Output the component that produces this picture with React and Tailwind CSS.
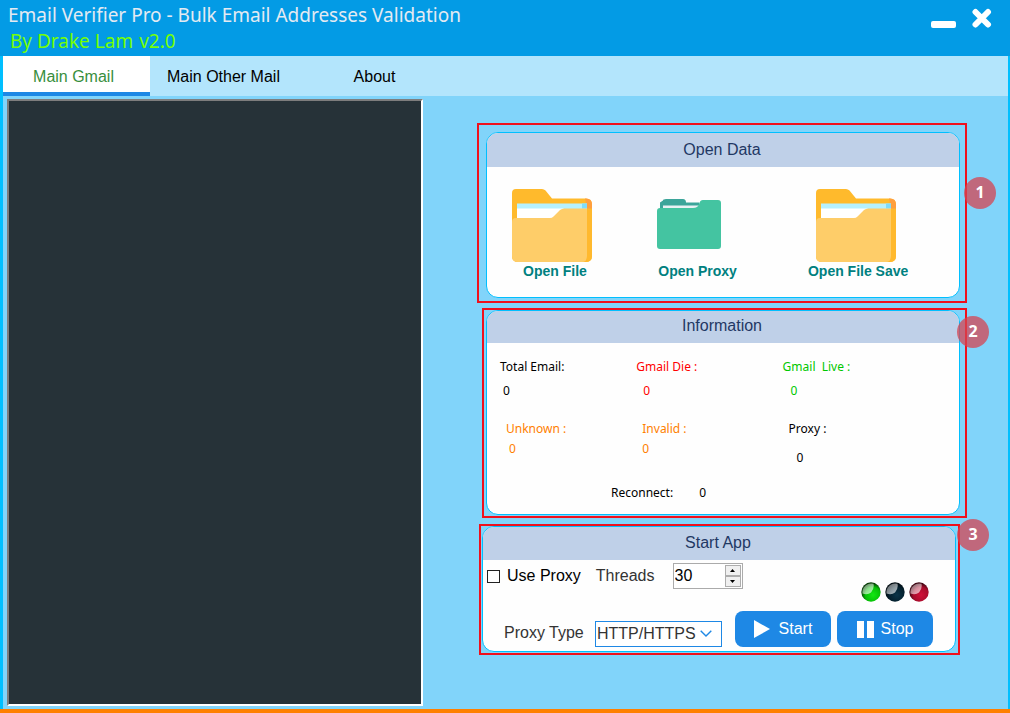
import { useState } from 'react';

function YellowFolder() {
  return (
    <svg viewBox="0 0 80 74" className="h-[74px] w-20" aria-hidden="true">
      <path d="M4 0H30q2 0 3.500 1.500L40 9.500H74q6 0 6 6V67q0 6-6 6H6q-6 0-6-6V4q0-4 4-4z" fill="#ffba2c" />
      <path d="M74 9.500q6 0 6 6V20H75l-2-10.500z" fill="#ff9f3e" />
      <path d="M5 14.500H75V32H5z" fill="#b5f1ff" />
      <path d="M70 14.500h5v5h-5z" fill="#7fdcfb" />
      <path d="M5 19.500H52L42 30H5z" fill="#fff" />
      <path d="M0 33q0-4 4-4H38q2 0 3.500-1.500L48 21Q50 19.500 52 19.500H75V68q0 5-5 5H6q-6 0-6-6z" fill="#fecd69" />
      <path d="M75 19.500H80V67q0 6-8 6 3-1 3-6z" fill="#ffb92e" />
    </svg>
  );
}

function TealFolder() {
  return (
    <svg viewBox="0 0 64 74" className="h-[74px] w-16" aria-hidden="true">
      <path d="M3 22V13.500l3-2Q6 10 9 10H26q3 0 3 3.500H42V26H3z" fill="#3ca59a" />
      <path d="M6 16.500H43V24H6z" fill="#e9f1f4" />
      <path d="M0 22Q0 19 3 19H36q5 0 6-4 1-4 4-4H61q3 0 3 3V57q0 3-3 3H3q-3 0-3-3z" fill="#44c4a1" />
    </svg>
  );
}

function Led({ id, light, mid, dark, label }) {
  return (
    <svg viewBox="0 0 20 20" className="size-5" role="img" aria-label={label}>
      <defs>
        <radialGradient id={id} cx="0.6" cy="0.65" r="0.6">
          <stop offset="0" stopColor={light} />
          <stop offset="0.65" stopColor={mid} />
          <stop offset="1" stopColor={dark} />
        </radialGradient>
        <linearGradient id={id + '-shine'} x1="0" y1="0" x2="1" y2="1">
          <stop offset="0" stopColor="#fff" stopOpacity="0.35" />
          <stop offset="1" stopColor="#fff" stopOpacity="0.7" />
        </linearGradient>
      </defs>
      <circle cx="10" cy="10" r="9.700" fill={'url(#' + id + ')'} />
      <path d="M1.500 11.500A8.800 8.800 0 0 1 12.500 1.800Q13.500 7 10 10.500 6.500 13.500 1.500 11.500z" fill={'url(#' + id + '-shine)'} />
    </svg>
  );
}

function Panel({ title, headerClass, className, badge, badgeClass, children }) {
  return (
    <section className={'relative border-2 border-[#f0101c] ' + className}>
      <div className="overflow-hidden rounded-xl border border-[#00bfff] bg-[#fefefe]">
        <h2 className={'flex items-center justify-center bg-[#bfd0e8] pr-0.5 text-[16px] leading-5 text-[#1f3864] ' + headerClass}>
          {title}
        </h2>
        {children}
      </div>
      <span
        className={
          'absolute z-10 flex size-8 items-center justify-center rounded-full bg-[#d54452]/75 pb-0.5 font-["Noto_Sans",sans-serif] text-[16px] font-bold text-white ' +
          badgeClass
        }
      >
        {badge}
      </span>
    </section>
  );
}

function Stat({ label, value, className, valueClass }) {
  return (
    <div className={'flex flex-col whitespace-pre ' + className}>
      <dt>{label}</dt>
      <dd className={valueClass}>{value}</dd>
    </div>
  );
}

const TABS = [
  { name: 'Main Gmail', width: 'w-[147px] pr-1.5' },
  { name: 'Main Other Mail', width: 'w-[147px]' },
  { name: 'About', width: 'w-[155px]' },
];

export default function App() {
  const [tab, setTab] = useState('Main Gmail');
  const [threads, setThreads] = useState(30);
  const [useProxy, setUseProxy] = useState(false);

  return (
    <div className='flex min-h-screen flex-col border-b-4 border-[#ff8000] bg-[#81d4fa] font-["Liberation_Sans",Arial,sans-serif] text-black'>
      <header className='flex h-14 justify-between bg-[#039be5] pl-2 pr-[18px] font-["Noto_Sans",sans-serif]'>
        <div className="pt-0.5">
          <h1 className="text-[19px] leading-[26px] text-[#e3eaf2]">Email Verifier Pro - Bulk Email Addresses Validation</h1>
          <p className="flex gap-1.5 pl-0.5 text-[19px] leading-[26px] text-[#76ff03]">
            <span>By Drake Lam</span>
            <span>v2.0</span>
          </p>
        </div>
        <div className="flex h-9 items-center gap-4">
          <button type="button" aria-label="Minimize" className="h-5 w-[25px]">
            <svg viewBox="0 0 25 20" className="h-5 w-[25px]">
              <rect x="0" y="13" width="25" height="7" rx="2" fill="#fff" />
            </svg>
          </button>
          <button type="button" aria-label="Close" className="size-5">
            <svg viewBox="0 0 20 20" className="size-5">
              <path d="M3.500 4L16 16.500M16 4L3.500 16.500" stroke="#fff" strokeWidth="6" strokeLinecap="round" />
            </svg>
          </button>
        </div>
      </header>

      <div className="flex flex-1 flex-col border-l-3 border-r-2 border-[#00bfff]">
        <nav role="tablist" className="flex h-10 bg-[#b3e5fc] text-[16px]">
          {TABS.map((t) => (
            <button
              key={t.name}
              type="button"
              role="tab"
              aria-selected={tab === t.name}
              onClick={() => setTab(t.name)}
              className={
                'border-b-4 pt-1.5 ' +
                t.width +
                (tab === t.name ? ' border-[#1e88e5] bg-white text-[#388e3c]' : ' border-transparent')
              }
            >
              {t.name}
            </button>
          ))}
        </nav>

        <main className="grid flex-1 grid-cols-[416fr_585fr] pb-[3px] pl-1 pt-[3px]">
          <textarea
            aria-label="Email output"
            className="h-full w-full resize-none border-2 border-b-white border-l-[#7d7d7d] border-r-white border-t-[#7d7d7d] bg-[#263238] p-1 text-sm text-white outline-none"
          />

          <div className="pt-6">
            <Panel
              title="Open Data"
              headerClass="h-[34px]"
              className="ml-[54px] mr-[41px] pb-[3px] pl-[7px] pr-[5px] pt-[7px]"
              badge="1"
              badgeClass="-right-[31px] top-[52px]"
            >
              <div className="grid grid-cols-[145fr_151fr_102fr] pb-[18px] pl-[25px] pr-[50px] pt-[22px] text-[14px] font-bold leading-4 text-[#008080]">
                <button type="button" className="flex w-[86px] flex-col items-start">
                  <YellowFolder />
                  <span className="w-full text-center">Open File</span>
                </button>
                <button type="button" className="flex w-[82px] flex-col items-start">
                  <TealFolder />
                  <span className="w-full whitespace-nowrap text-center">Open Proxy</span>
                </button>
                <button type="button" className="flex flex-col items-center">
                  <span className="pr-1"><YellowFolder /></span>
                  <span className="whitespace-nowrap">Open File Save</span>
                </button>
              </div>
            </Panel>

            <Panel
              title="Information"
              headerClass="h-8 pb-0.5"
              className="ml-[59px] mr-[41px] mt-[5px] pb-px pl-0.5 pr-[5px]"
              badge="2"
              badgeClass="-right-6 top-1.5"
            >
              <dl className='grid grid-cols-[136fr_146fr_176fr] pl-[13px] pt-4 font-["Noto_Sans",sans-serif] text-[12px] leading-4'>
                <Stat label="Total Email:" value="0" valueClass="pl-[3px] pt-2" className="" />
                <Stat label="Gmail Die :" value="0" valueClass="pl-[7px] pt-2" className="text-[#ff0000]" />
                <Stat label="Gmail  Live :" value="0" valueClass="pl-2 pt-2" className="text-[#00c800]" />
                <Stat label="Unknown :" value="0" valueClass="pl-[3px] pt-1" className="pl-1.5 pt-[22px] text-[#ff8000]" />
                <Stat label="Invalid :" value="0" valueClass="pt-1" className="pl-1.5 pt-[22px] text-[#ff8000]" />
                <Stat label="Proxy :" value="0" valueClass="pl-2 pt-[13px]" className="pl-1.5 pt-[22px]" />
              </dl>
              <dl className='flex gap-[26px] pb-[13px] pl-[124px] pt-[19px] font-["Noto_Sans",sans-serif] text-[12px] leading-4'>
                <dt>Reconnect:</dt>
                <dd>0</dd>
              </dl>
            </Panel>

            <Panel
              title="Start App"
              headerClass="h-[33px] pb-0.5"
              className="ml-14 mr-12 mt-1.5 pb-px pl-px pr-0.5"
              badge="3"
              badgeClass="-right-[31px] -top-[7px]"
            >
              <div className="flex flex-col gap-2 pb-1 pt-[3px] text-[16px]">
                <div className="flex h-[39px] items-start pl-1 pr-[26px]">
                  <label className="flex h-[26px] items-center gap-[7px]">
                    <input
                      type="checkbox"
                      checked={useProxy}
                      onChange={(e) => setUseProxy(e.target.checked)}
                      className="size-[13px] appearance-none border border-[#222] bg-white checked:bg-[#1e88e5]"
                    />
                    Use Proxy
                  </label>
                  <label htmlFor="threads" className="ml-[15px] leading-[26px] text-[#333]">
                    Threads
                  </label>
                  <div className="ml-[18px] flex h-[26px] w-[70px] border border-[#ababab] bg-white">
                    <input
                      id="threads"
                      type="text"
                      inputMode="numeric"
                      value={threads}
                      onChange={(e) => setThreads(Number(e.target.value) || 0)}
                      className="min-w-0 flex-1 pl-px leading-6 outline-none"
                    />
                    <div className="m-px flex w-4 flex-col">
                      <button
                        type="button"
                        aria-label="Increase threads"
                        onClick={() => setThreads(threads + 1)}
                        className="flex flex-1 items-center justify-center border border-[#adadad] bg-[#f0f0f0]"
                      >
                        <svg viewBox="0 0 5 3" className="h-[3px] w-[5px]"><path d="M0 3L2.500 0 5 3z" /></svg>
                      </button>
                      <button
                        type="button"
                        aria-label="Decrease threads"
                        onClick={() => setThreads(Math.max(0, threads - 1))}
                        className="flex flex-1 items-center justify-center border border-[#adadad] bg-[#f0f0f0]"
                      >
                        <svg viewBox="0 0 5 3" className="h-[3px] w-[5px]"><path d="M0 0L2.500 3 5 0z" /></svg>
                      </button>
                    </div>
                  </div>
                  <div className="ml-auto flex gap-1 self-end">
                    <Led id="led-run" label="Running" light="#12e812" mid="#06c006" dark="#043c04" />
                    <Led id="led-idle" label="Idle" light="#0a3448" mid="#04202e" dark="#000a10" />
                    <Led id="led-stop" label="Stopped" light="#d01038" mid="#a80c2c" dark="#3c0410" />
                  </div>
                </div>

                <div className="flex h-[37px] items-end pl-[21px] pr-[22px]">
                  <label htmlFor="proxy-type" className="w-[91px] whitespace-nowrap pb-1 leading-5 text-[#333]">
                    Proxy Type
                  </label>
                  <div className="relative h-[26px] w-[127px]">
                    <select
                      id="proxy-type"
                      className="h-full w-full appearance-none border border-[#1e88e5] bg-white pl-px leading-6 text-[#333] outline-none"
                    >
                      <option>HTTP/HTTPS</option>
                      <option>SOCKS4</option>
                      <option>SOCKS5</option>
                    </select>
                    <svg viewBox="0 0 12 7" className="pointer-events-none absolute right-2.5 top-[9px] h-[7px] w-3">
                      <path d="M0.700 0.700L6 6 11.300 0.700" fill="none" stroke="#1e88e5" strokeWidth="1.400" />
                    </svg>
                  </div>
                  <button
                    type="button"
                    className="ml-auto flex h-9 w-24 items-center justify-center gap-[9px] rounded-lg bg-[#1e88e5] text-white"
                  >
                    <svg viewBox="0 0 16 18" className="h-[18px] w-4"><path d="M0 0L16 9 0 18z" fill="#fff" /></svg>
                    Start
                  </button>
                  <button
                    type="button"
                    className="ml-1.5 flex h-9 w-24 items-center justify-center gap-[7px] rounded-lg bg-[#1e88e5] text-white"
                  >
                    <svg viewBox="0 0 17 17" className="size-[17px]"><path d="M0 0H7V17H0zM10 0H17V17H10z" fill="#fff" /></svg>
                    Stop
                  </button>
                </div>
              </div>
            </Panel>
          </div>
        </main>
      </div>
    </div>
  );
}
